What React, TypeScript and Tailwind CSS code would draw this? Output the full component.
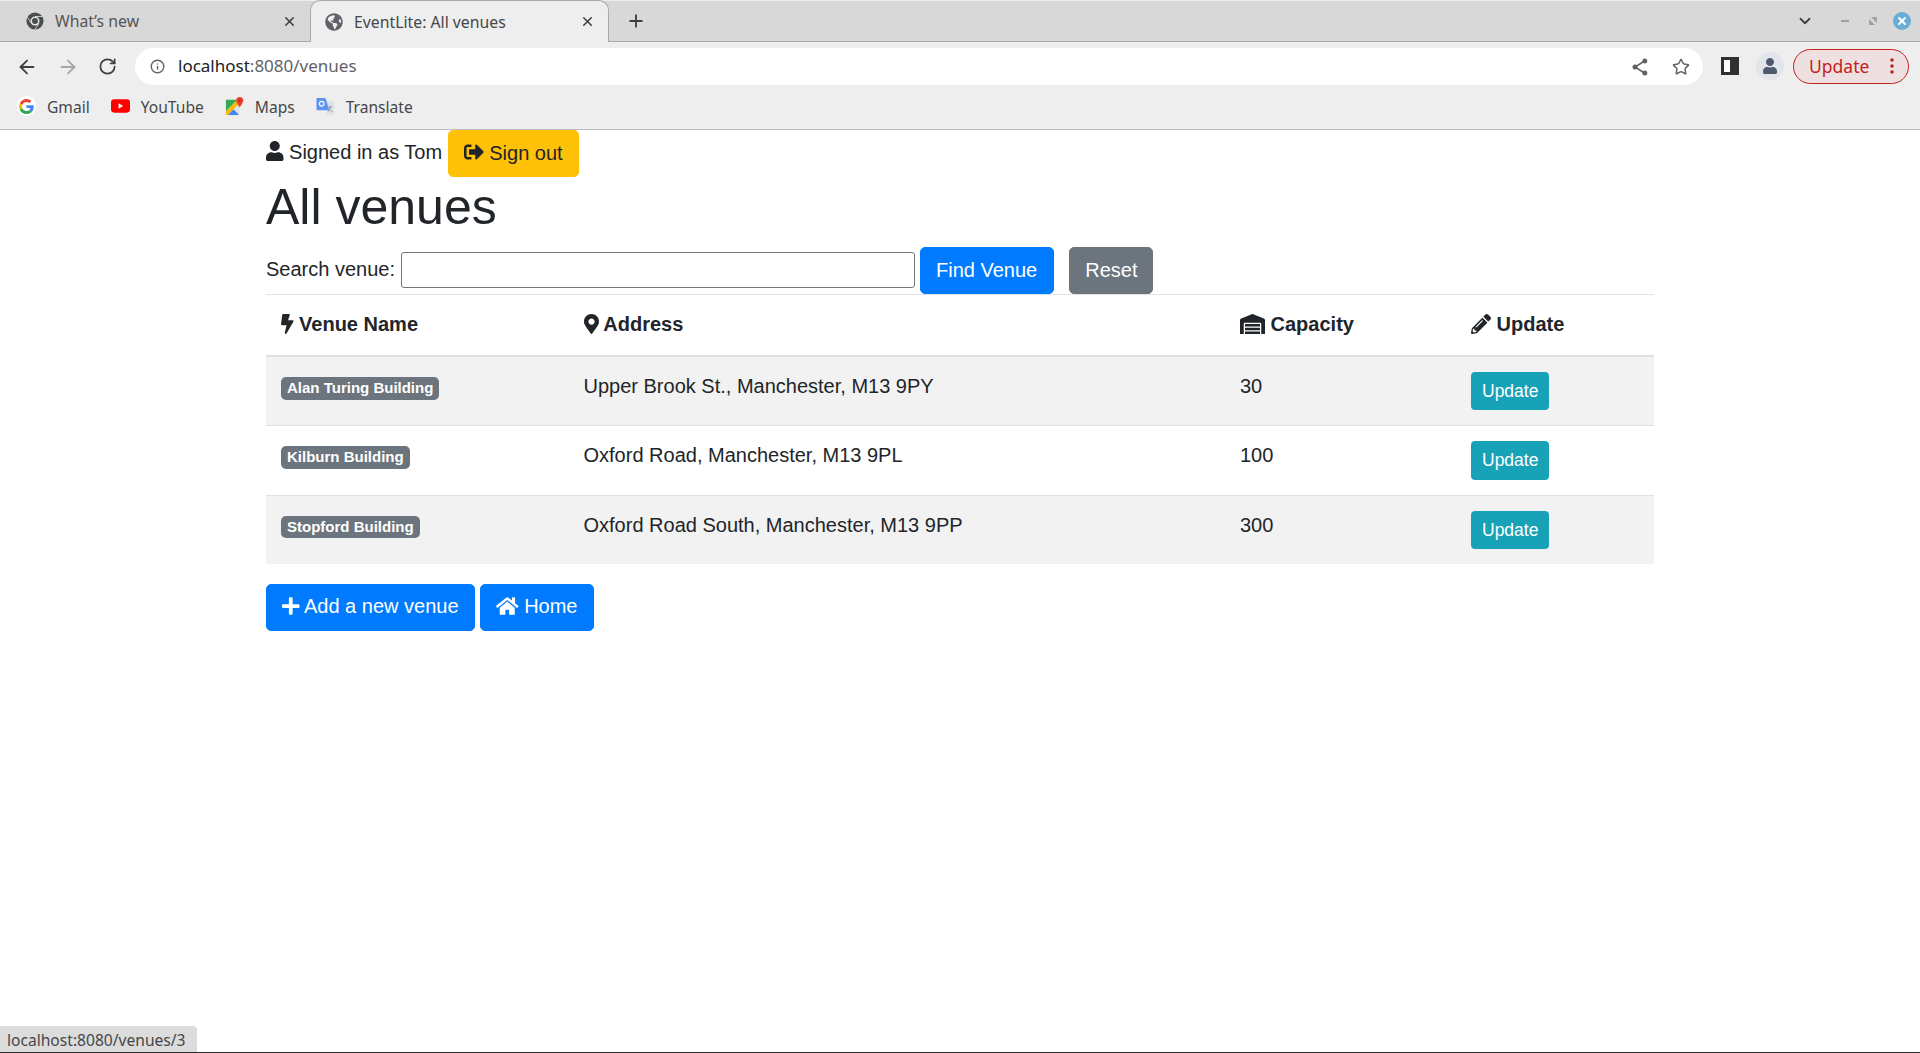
import { ArrowLeft, ArrowRight, RotateCw, Info, Star, X, Plus, ChevronDown } from 'lucide-react';
import {
  FaBolt,
  FaGlobeAmericas,
  FaHome,
  FaMapMarkerAlt,
  FaPencilAlt,
  FaPlus,
  FaSignOutAlt,
  FaUser,
  FaWarehouse,
} from 'react-icons/fa';

function ChromeLogo() {
  return (
    <svg viewBox="0 0 20 20" className="w-[18px] h-[18px]">
      <circle cx="10" cy="10" r="9.500" fill="#4a4d50" />
      <circle cx="10" cy="10" r="5" fill="#e4e4e4" />
      <circle cx="10" cy="10" r="3.300" fill="#4a4d50" />
      <path d="M10 5h8.500M5.700 12.500 1.500 5.500M14.300 12.500 10 19.500" stroke="#e4e4e4" strokeWidth=".9" fill="none" />
    </svg>
  );
}

function GoogleLogo() {
  return (
    <span className="w-[20px] h-[20px] rounded-full bg-white flex items-center justify-center">
      <svg viewBox="0 0 48 48" className="w-[15px] h-[15px]">
        <path fill="#EA4335" d="M24 9.500c3.500 0 6.700 1.200 9.200 3.600l6.900-6.900C35.900 2.400 30.500 0 24 0 14.600 0 6.500 5.400 2.600 13.200l8 6.200C12.500 13.600 17.800 9.500 24 9.500z" />
        <path fill="#4285F4" d="M47 24.500c0-1.600-.1-3.100-.4-4.500H24v9h12.900c-.6 3-2.200 5.500-4.700 7.200l7.700 6C44.400 38 47 31.800 47 24.500z" />
        <path fill="#FBBC05" d="M10.500 28.600c-.5-1.400-.8-3-.8-4.600s.3-3.200.8-4.600l-8-6.200C.9 16.500 0 20.100 0 24s.9 7.500 2.600 10.800l7.900-6.200z" />
        <path fill="#34A853" d="M24 48c6.500 0 11.900-2.100 15.900-5.800l-7.700-6c-2.200 1.400-4.900 2.300-8.200 2.300-6.200 0-11.500-4.200-13.400-9.800l-8 6.200C6.500 42.600 14.600 48 24 48z" />
      </svg>
    </span>
  );
}

function YouTubeLogo() {
  return (
    <svg viewBox="0 0 20 14" className="w-[19px] h-[14px]">
      <rect width="20" height="14" rx="3.500" fill="#ff0000" />
      <path d="M8 4.200v5.600l4.800-2.800z" fill="#fff" />
    </svg>
  );
}

function MapsLogo() {
  return (
    <svg viewBox="0 0 20 20" className="w-[19px] h-[19px]">
      <path d="M1 3h11v1L1 15z" fill="#34a853" />
      <path d="M12 3v1L1 15v4h2L14 8V3z" fill="#fbbc04" />
      <path d="M3 19h12l-6-6z" fill="#4285f4" />
      <path d="M15 19 10 13l5-5v11z" fill="#dfe3e8" />
      <path d="M15.500 0a3.800 3.800 0 0 0-3.800 3.800c0 2.600 3.800 7.200 3.800 7.200s3.800-4.600 3.800-7.200A3.800 3.800 0 0 0 15.500 0z" fill="#ea4335" />
      <circle cx="15.500" cy="3.800" r="1.300" fill="#a52714" />
    </svg>
  );
}

function TranslateLogo() {
  return (
    <svg viewBox="0 0 20 20" className="w-[19px] h-[19px]">
      <path d="M8 4h10a1 1 0 0 1 1 1v13a1 1 0 0 1-1 1h-6z" fill="#dfe3e8" />
      <path d="M1.500 1H10l4 13H1.500a1 1 0 0 1-1-1V2a1 1 0 0 1 1-1z" fill="#5f93ec" />
      <circle cx="6" cy="7" r="2.400" fill="none" stroke="#fff" strokeWidth="1.100" />
      <path d="M13 10.500h4.500M15 9.500c0 3-1 5-2.500 6M14 12c.5 1.500 2 3 3.500 3.500" stroke="#8a9099" strokeWidth=".9" fill="none" />
    </svg>
  );
}

function Bookmark({ icon, label }: { icon: React.ReactNode; label: string }) {
  return (
    <div className="flex items-center gap-[11px]">
      <span className="w-[19px] flex justify-center">{icon}</span>
      <span className="pt-[2px]">{label}</span>
    </div>
  );
}

function BrowserChrome() {
  return (
    <div className="font-['Noto_Sans',sans-serif] text-[15.8px] text-[#45474a] h-[130px] border-b border-[#bdbdbd] bg-[#eeeeee]">
      {/* Tab strip */}
      <div className="h-[42px] bg-[#d8d8d8] border-t border-[#ececec] flex items-stretch relative">
        <div className="w-[310px] border-b border-[#a9a9a9] flex items-center pl-[26px] pr-[13px]">
          <ChromeLogo />
          <span className="ml-[11px] pt-[2px] flex-1 text-[#555]">What’s new</span>
          <X className="w-[15px] h-[15px] text-[#3c4043]" strokeWidth={2.500} />
        </div>
        <div className="w-[299px] bg-[#eeeeee] border border-b-0 border-[#a9a9a9] rounded-t-[10px] flex items-center pl-[14px] pr-[13px] h-[42px] -mt-px">
          <FaGlobeAmericas className="w-[18px] h-[18px] text-[#5f6368]" />
          <span className="ml-[11px] pt-[2px] flex-1 text-[#45474a]">EventLite: All venues</span>
          <X className="w-[15px] h-[15px] text-[#3c4043]" strokeWidth={2.500} />
        </div>
        <div className="flex-1 border-b border-[#a9a9a9] flex items-center pl-[17px] pr-[9px]">
          <Plus className="w-[20px] h-[20px] text-[#3c4043]" strokeWidth={2.200} />
          <div className="flex-1" />
          <ChevronDown className="w-[18px] h-[18px] text-[#3c4043] mr-[27px]" strokeWidth={2.400} />
          <div className="w-[8px] h-[2px] bg-[#a0a0a0] mr-[20px]" />
          <svg viewBox="0 0 8 8" className="w-[8px] h-[8px] mr-[16px]">
            <path d="M2 0h6v6zM0 2l6 6H0z" fill="#a0a0a0" />
          </svg>
          <div className="w-[18px] h-[18px] rounded-full bg-[#68add5] flex items-center justify-center">
            <X className="w-[12px] h-[12px] text-white" strokeWidth={4} />
          </div>
        </div>
      </div>

      {/* Toolbar */}
      <div className="h-[43px] flex items-start pt-[6px]">
        <div className="flex items-center h-[37px] pl-[16px] gap-[19px]">
          <ArrowLeft className="w-[22px] h-[22px] text-[#3c4043]" strokeWidth={2} />
          <ArrowRight className="w-[22px] h-[22px] text-[#a4a6a8]" strokeWidth={2} />
          <RotateCw className="w-[19px] h-[19px] text-[#3c4043]" strokeWidth={2.200} />
        </div>
        <div className="ml-[18px] w-[1568px] h-[37px] bg-white rounded-full flex items-center pl-[15px] pr-[13px]">
          <Info className="w-[15px] h-[15px] text-[#5f6368]" strokeWidth={2.200} />
          <span className="ml-[13px] mb-[2px] text-[17px] text-[#202124]">
            localhost<span className="text-[#5f6368]">:8080/venues</span>
          </span>
          <div className="flex-1" />
          <svg viewBox="0 0 16 18" className="w-[16px] h-[18px] mr-[24px] text-[#5f6368]">
            <path d="M12.500 3 3 9l9.500 6" stroke="currentColor" strokeWidth="1.500" fill="none" />
            <circle cx="12.800" cy="3" r="2.500" fill="currentColor" />
            <circle cx="3" cy="9" r="2.500" fill="currentColor" />
            <circle cx="12.800" cy="15" r="2.500" fill="currentColor" />
          </svg>
          <Star className="w-[18px] h-[18px] text-[#5f6368]" strokeWidth={2} />
        </div>
        <div className="flex items-center h-[36px] ml-[18px]">
          <div className="w-[18px] h-[18px] border-[3px] border-[#303030] bg-white flex justify-end">
            <div className="w-[6px] h-full bg-[#303030]" />
          </div>
          <div className="ml-[17px] w-[28px] h-[28px] rounded-full bg-[#e2e5ea] flex items-center justify-center">
            <FaUser className="w-[16px] h-[16px] text-[#4f5b6d]" />
          </div>
          <div className="ml-[9px] w-[116px] h-[35px] rounded-full border border-[#c5221f] bg-[#eee0e0] flex items-center pl-[15px] pr-[14px] text-[#c5221f] text-[17.5px]">
            <span className="flex-1">Update</span>
            <svg viewBox="0 0 4 16" className="w-[4px] h-[16px]">
              <circle cx="2" cy="2" r="1.800" fill="#b3261e" />
              <circle cx="2" cy="8" r="1.800" fill="#b3261e" />
              <circle cx="2" cy="14" r="1.800" fill="#b3261e" />
            </svg>
          </div>
        </div>
      </div>

      {/* Bookmarks bar */}
      <div className="h-[44px] flex items-center pl-[17px] gap-[21px] pb-[1px] text-[15.6px]">
        <Bookmark icon={<GoogleLogo />} label="Gmail" />
        <Bookmark icon={<YouTubeLogo />} label="YouTube" />
        <Bookmark icon={<MapsLogo />} label="Maps" />
        <Bookmark icon={<TranslateLogo />} label="Translate" />
      </div>
    </div>
  );
}

const venues = [
  { name: 'Alan Turing Building', address: 'Upper Brook St., Manchester, M13 9PY', capacity: 30 },
  { name: 'Kilburn Building', address: 'Oxford Road, Manchester, M13 9PL', capacity: 100 },
  { name: 'Stopford Building', address: 'Oxford Road South, Manchester, M13 9PP', capacity: 300 },
];

const iconClass = 'inline h-[1em] align-[-0.125em]';

export default function App() {
  return (
    <div className="relative h-[1053px] overflow-hidden bg-white border-b border-[#2b2b2b]">
      <BrowserChrome />

      <div className="w-[1388px] ml-[266px] font-['Liberation_Sans',sans-serif] text-[20px] leading-[30px] text-[#212529]">
        <div>
          <FaUser className={`${iconClass} w-[0.875em]`} /> Signed in as Tom{' '}
          <button className="inline-block align-[-1px] bg-[#ffc107] border border-[#ffc107] rounded-[5px] px-[15px] pt-[6.5px] pb-[8.5px] text-[#212529]">
            <FaSignOutAlt className={`${iconClass} w-[1em]`} /> Sign out
          </button>
        </div>

        <h1 className="text-[50px] leading-[60px] font-medium mb-[10px]">All venues</h1>

        <form className="flex items-center">
          <label className="mb-[3px] mr-[1px]">Search venue:</label>
          <input
            type="text"
            className="ml-[5px] mb-[2px] w-[514px] h-[36px] border border-[#767676] rounded-[3px] bg-white"
          />
          <button type="button" className="ml-[5px] bg-[#007bff] border border-[#007bff] rounded-[5px] pl-[15px] pr-[16px] pt-[6.5px] pb-[8.5px] text-white">
            Find Venue
          </button>
          <button type="button" className="ml-[15px] bg-[#6c757d] border border-[#6c757d] rounded-[5px] px-[15px] pt-[6.5px] pb-[8.5px] text-white">
            Reset
          </button>
        </form>

        <table className="w-full table-fixed border-collapse mb-[20px]">
          <thead>
            <tr className="text-left">
              <th className="w-[302.5px] px-[15px] pt-[14px] pb-[16px] font-bold border-t border-b-2 border-[#dee2e6] align-bottom">
                <FaBolt className={`${iconClass} w-[0.625em]`} /> Venue Name
              </th>
              <th className="w-[656.5px] px-[15px] pt-[14px] pb-[16px] font-bold border-t border-b-2 border-[#dee2e6] align-bottom">
                <FaMapMarkerAlt className={`${iconClass} w-[0.75em]`} /> Address
              </th>
              <th className="w-[231px] px-[15px] pt-[14px] pb-[16px] font-bold border-t border-b-2 border-[#dee2e6] align-bottom">
                <FaWarehouse className={`${iconClass} w-[1.25em]`} /> Capacity
              </th>
              <th className="px-[15px] pt-[14px] pb-[16px] font-bold border-t border-b-2 border-[#dee2e6] align-bottom">
                <FaPencilAlt className={`${iconClass} w-[1em]`} /> Update
              </th>
            </tr>
          </thead>
          <tbody>
            {venues.map((venue, idx) => (
              <tr key={venue.name} className={idx % 2 === 0 ? 'bg-[#f2f2f2]' : 'bg-white'}>
                <td className="px-[15px] pt-[14px] pb-[16px] align-top border-t border-[#dee2e6]">
                  <span className="inline-block bg-[#6c757d] text-white text-[15px] leading-[15px] font-bold rounded-[5px] px-[6px] pt-[3px] pb-[4.5px]">
                    {venue.name}
                  </span>
                </td>
                <td className="px-[15px] pt-[14px] pb-[16px] align-top border-t border-[#dee2e6]">{venue.address}</td>
                <td className="px-[15px] pt-[14px] pb-[16px] align-top border-t border-[#dee2e6]">{venue.capacity}</td>
                <td className="p-[15px] align-top border-t border-[#dee2e6]">
                  <button className="inline-block bg-[#17a2b8] border border-[#17a2b8] rounded-[3.5px] px-[10px] py-[5px] text-white text-[17.5px] leading-[26.25px]">
                    Update
                  </button>
                </td>
              </tr>
            ))}
          </tbody>
        </table>

        <div>
          <button className="inline-block bg-[#007bff] border border-[#007bff] rounded-[5px] px-[15px] pt-[6.5px] pb-[8.5px] text-white">
            <FaPlus className={`${iconClass} w-[0.875em]`} /> Add a new venue
          </button>{' '}
          <button className="inline-block bg-[#007bff] border border-[#007bff] rounded-[5px] pl-[15px] pr-[16px] pt-[6.5px] pb-[8.5px] text-white">
            <FaHome className={`${iconClass} w-[1.125em]`} /> Home
          </button>
        </div>
      </div>

      {/* Link hover status bubble */}
      <div className="absolute left-0 bottom-0 w-[197px] h-[26px] pl-[7px] bg-[#dcdcdc] rounded-tr-[4px] font-['Noto_Sans',sans-serif] text-[15.6px] leading-[28px] text-[#45474a] whitespace-nowrap">
        localhost:8080/venues/3
      </div>
    </div>
  );
}
